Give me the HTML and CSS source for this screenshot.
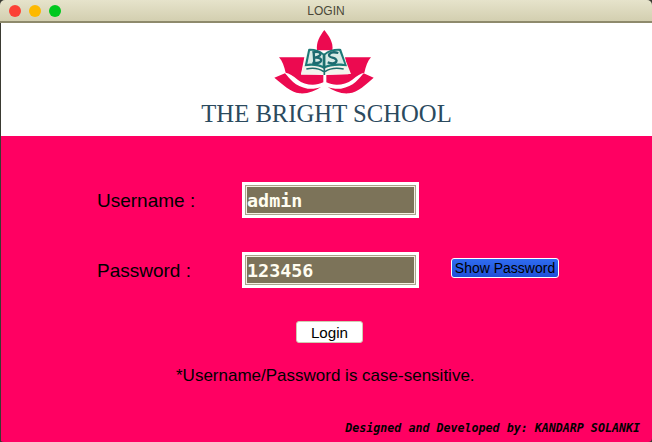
FILE: index.html
```html
<!DOCTYPE html>
<html lang="en">
<head>
<meta charset="utf-8">
<title>LOGIN</title>
<link rel="stylesheet" href="styles.css">
</head>
<body>
<div class="window">
  <header class="titlebar">
    <div class="lights">
      <span class="light light-red"></span>
      <span class="light light-yellow"></span>
      <span class="light light-green"></span>
    </div>
    <div class="title">LOGIN</div>
  </header>
  <section class="brand">
    <svg class="logo" viewBox="0 0 360 225" width="120" height="75" aria-hidden="true">
      <path class="petal" d="M178 15C164 34 153 52 156 76L202 76C206 52 191 32 178 15Z"/>
      <path class="petal" d="M42 97L118 97L108 148L175 150L175 172C150 184 118 180 98 164C84 152 72 144 62 143C58 125 52 108 42 97Z"/>
      <path class="petal" d="M318 97L240 97L250 148L184 150L184 172C209 184 240 180 262 164C276 152 288 144 298 143C302 125 308 108 318 97Z"/>
      <path class="petal" d="M28 158L60 145C72 158 90 186 128 191C145 192 158 190 168 186C150 198 128 207 104 205C78 202 52 178 28 158Z"/>
      <path class="petal" d="M326 158L296 145C284 158 266 186 228 191C212 192 198 190 188 186C206 198 228 207 252 205C278 202 304 178 326 158Z"/>
      <path class="paper" d="M128 76L176 84L230 76L258 147L108 149Z"/>
      <path class="book" d="M177 86C164 76 146 70 130 72L119 124C140 120 162 122 177 132C192 122 222 120 246 124L228 72C208 70 190 76 177 86Z"/>
      <path class="page" d="M135 78C148 76 162 81 173 90L173 122C160 116 144 114 127 117Z"/>
      <path class="page" d="M181 90C192 81 208 76 223 78L238 117C218 114 196 116 181 122Z"/>
      <path class="bs" d="M146 82L148 114M142 82C170 76 176 92 150 98C178 96 174 118 142 114M220 84C194 76 182 94 202 98C224 102 216 122 188 112"/>
      <path class="spine" d="M178 86L178 150M124 132C142 128 162 130 176 140M236 132C216 128 194 130 180 140"/>
    </svg>
    <div class="school">THE BRIGHT SCHOOL</div>
  </section>
  <main class="panel">
    <form class="login">
      <div class="row">
        <label class="label">Username :</label>
        <div class="field">admin</div>
      </div>
      <div class="row">
        <label class="label">Password :</label>
        <div class="field">123456</div>
        <button type="button" class="show">Show Password</button>
      </div>
      <button type="button" class="submit">Login</button>
      <p class="note">*Username/Password is case-sensitive.</p>
    </form>
    <footer class="credit">Designed and Developed by: KANDARP SOLANKI</footer>
  </main>
</div>
</body>
</html>
```
FILE: styles.css
```css
* { box-sizing: border-box; }
html, body { margin: 0; padding: 0; height: 100%; background: #3a3a32; }
.window {
  width: 652px;
  height: 442px;
  display: flex;
  flex-direction: column;
  overflow: hidden;
  border-radius: 5px 5px 4px 4px;
  font-family: "Liberation Sans", Arial, sans-serif;
}
.titlebar {
  height: 23px;
  flex: none;
  display: flex;
  align-items: center;
  position: relative;
  background: linear-gradient(#e6e3cb, #d3cfb0);
  border-bottom: 2px solid #8e8a6c;
}
.lights { display: flex; gap: 8px; padding-left: 9px; margin-top: 1px; }
.light { width: 12px; height: 12px; border-radius: 50%; }
.light-red { background: #fc4136; }
.light-yellow { background: #fdb900; }
.light-green { background: #00c81e; }
.title {
  position: absolute;
  left: 0;
  right: 0;
  text-align: center;
  font-size: 12px;
  color: #4a4838;
}
.brand {
  height: 113px;
  flex: none;
  background: #fff;
  display: flex;
  flex-direction: column;
  align-items: center;
  margin-left: 1px;
}
.logo { display: block; margin: 2px 3px 0 0; flex: none; filter: blur(0.3px); }
.petal { fill: #ec0a50; }
.paper { fill: #f4f3ec; }
.book { fill: #1d7a78; }
.page { fill: #d9ebe6; }
.bs { fill: none; stroke: #1c6a70; stroke-width: 7; }
.spine { fill: none; stroke: #1d6d6c; stroke-width: 5; }
.school {
  font-family: "Liberation Serif", "Times New Roman", serif;
  font-size: 24.7px;
  line-height: 30px;
  color: #2b4a5e;
  margin-top: -1px;
  white-space: nowrap;
}
.panel {
  flex: 1;
  background: #ff0062;
  margin-left: 1px;
  display: flex;
  flex-direction: column;
  position: relative;
}
.login {
  display: flex;
  flex-direction: column;
  align-items: flex-start;
  padding: 46px 0 0 96px;
}
.row {
  display: flex;
  align-items: center;
  height: 36px;
  margin-bottom: 34px;
}
.label {
  width: 145px;
  margin-top: 2px;
  font-size: 19px;
  line-height: 38px;
  color: #000;
}
.field {
  width: 177px;
  height: 36px;
  border: 3px solid #fff;
  box-shadow: inset 0 0 0 1px #a9a28c, inset 0 0 0 2px #f3f1e2;
  background: #7c7359;
  padding-left: 2px;
  font-family: "DejaVu Sans Mono", monospace;
  font-weight: 700;
  font-size: 18.4px;
  line-height: 32px;
  color: #fffdf0;
}
.show {
  margin: -4px 0 0 32px;
  width: 108px;
  height: 20px;
  padding: 0;
  border: 1px solid #fff;
  border-radius: 3px;
  background: linear-gradient(#2f6cf0, #1f4fd8);
  font-family: inherit;
  font-size: 14px;
  color: #000;
}
.submit {
  align-self: flex-start;
  margin: -1px 0 0 199px;
  width: 67px;
  height: 22px;
  padding: 0;
  border: 1px solid #cfcbb0;
  border-radius: 3px;
  background: #fff;
  font-family: inherit;
  font-size: 15.2px;
  color: #000;
}
.note {
  margin: 23px 0 0 79px;
  font-size: 17px;
  line-height: 20px;
  color: #000;
}
.credit {
  margin-top: auto;
  padding: 0 12px 7px 0;
  text-align: right;
  font-family: "DejaVu Sans Mono", monospace;
  font-weight: 700;
  font-style: italic;
  font-size: 11.66px;
  line-height: 14px;
  color: #000;
}
```
